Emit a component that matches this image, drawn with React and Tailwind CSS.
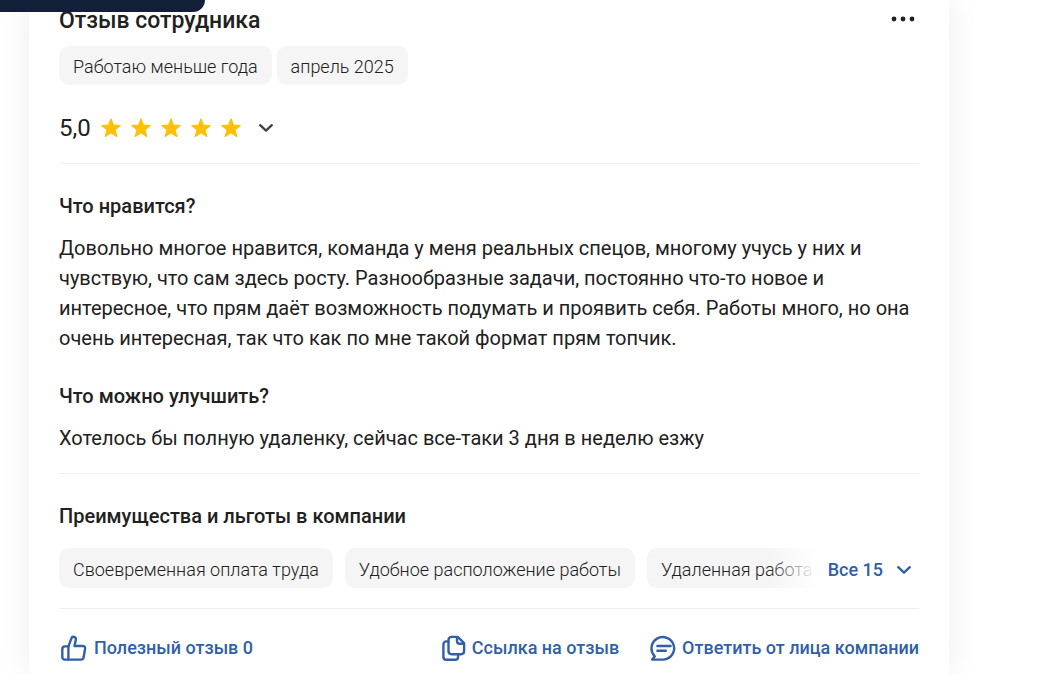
import React, { useState } from 'react';

const benefits = [
  'Своевременная оплата труда',
  'Удобное расположение работы',
  'Удаленная работа',
];

const StarIcon = () => (
  <svg width="20" height="20" viewBox="0 0 20 20" fill="#ffc107" aria-hidden="true">
    <path
      d="M10 0.9l2.5 6.3 6.7 0.3-5.2 4.3 1.8 6.6L10 14.8l-5.8 3.6 1.8-6.6L0.8 7.5l6.7-0.3z"
      stroke="#ffc107"
      strokeWidth="1.2"
      strokeLinejoin="round"
    />
  </svg>
);

const ChevronIcon = () => (
  <svg width="16" height="10" viewBox="0 0 16 10" fill="none" aria-hidden="true">
    <path
      d="M2.2 2.2L8 7.6l5.8-5.4"
      stroke="currentColor"
      strokeWidth="2.4"
      strokeLinecap="round"
      strokeLinejoin="round"
    />
  </svg>
);

const ThumbIcon = () => (
  <svg width="28" height="28" viewBox="0 0 28 28" fill="none" stroke="currentColor" strokeWidth="2.4" strokeLinejoin="round" strokeLinecap="round" aria-hidden="true">
    <path d="M9.4 12.4L12.4 4.4c.4-1.2 1.4-1.8 2.5-1.5 1.5.4 2.2 1.5 1.9 3l-1.3 6.1h8.3c1.6 0 2.6 1.2 2.3 2.7l-1.5 8.6c-.2 1.4-1.2 2.3-2.7 2.3H6c-1.7 0-2.7-1-2.7-2.7v-7.8c0-1.7 1-2.7 2.7-2.7h3.4z" />
    <path d="M9.4 12.4v13.2" />
  </svg>
);

const CopyIcon = () => (
  <svg width="26" height="28" viewBox="0 0 26 28" fill="none" stroke="currentColor" strokeWidth="2.4" strokeLinejoin="round" strokeLinecap="round" aria-hidden="true">
    <path d="M10.6 2.9h6.1l6.4 6.2v8c0 1.9-1.2 3.1-3.1 3.1h-9.4c-1.9 0-3.1-1.2-3.1-3.1V6c0-1.9 1.2-3.1 3.1-3.1z" />
    <path d="M16 3.1v4.2c0 1.6.9 2.5 2.5 2.5h4.3" />
    <path d="M7.4 7.4H5.5c-1.9 0-3.1 1.2-3.1 3.1v12.2c0 1.9 1.2 3.1 3.1 3.1H14c1.9 0 3.1-1.2 3.1-3.1v-2.4" />
  </svg>
);

const MessageIcon = () => (
  <svg width="28" height="28" viewBox="0 0 28 28" fill="none" stroke="currentColor" strokeWidth="2.4" strokeLinejoin="round" strokeLinecap="round" aria-hidden="true">
    <path d="M14.4 25.6H3.2l2.6-3.3A11.3 11.3 0 1 1 14.4 25.6z" />
    <path d="M8.4 12h13.2M8.4 16.8h8.4" />
  </svg>
);

const Section = ({ title, children }) => (
  <section>
    <h3 className="text-xl leading-[30px] font-medium">{title}</h3>
    <p className="mt-3 text-xl leading-[30px]">{children}</p>
  </section>
);

const App = () => {
  const [likes, setLikes] = useState(0);

  return (
    <div className="relative min-h-screen overflow-hidden bg-white pl-[29px] pr-[105px] font-['Roboto','Liberation_Sans',sans-serif] text-[#212121]">
      <div className="absolute left-0 top-0 z-10 h-3 w-[205px] rounded-br-xl bg-[#112038]" />

      <article className="min-h-screen bg-white px-[30px] pt-[5px] shadow-[0_0_32px_rgba(0,0,0,0.07)]">
        <header className="flex items-center justify-between">
          <h2 className="text-[23px] leading-8 font-medium">Отзыв сотрудника</h2>
          <button type="button" aria-label="Действия" className="p-1 pb-2">
            <svg width="24" height="6" viewBox="0 0 24 6" fill="currentColor" aria-hidden="true">
              <circle cx="3" cy="3" r="2.4" />
              <circle cx="12" cy="3" r="2.4" />
              <circle cx="21" cy="3" r="2.4" />
            </svg>
          </button>
        </header>

        <div className="mt-[9px] flex gap-[5px] text-lg font-light">
          <span className="rounded-[10px] bg-[#f5f5f5] px-[14px] pt-[7px] pb-1">Работаю меньше года</span>
          <span className="rounded-[10px] bg-[#f5f5f5] px-[14px] pt-[7px] pb-1">апрель 2025</span>
        </div>

        <div className="mt-7 flex items-center border-b border-[#eeeeee] pb-5">
          <span className="text-2xl leading-[30px]">5,0</span>
          <div className="ml-[10px] flex gap-[10px]" role="img" aria-label="Оценка 5 из 5">
            {[1, 2, 3, 4, 5].map((n) => (
              <StarIcon key={n} />
            ))}
          </div>
          <button type="button" aria-label="Показать оценки" className="ml-[17px] text-[#424242]">
            <ChevronIcon />
          </button>
        </div>

        <div className="flex flex-col gap-7 border-b border-[#eeeeee] pt-[27px] pb-5">
          <Section title="Что нравится?">
            Довольно многое нравится, команда у меня реальных спецов, многому учусь у них и
            чувствую, что сам здесь росту. Разнообразные задачи, постоянно что-то новое и
            интересное, что прям даёт возможность подумать и проявить себя. Работы много, но она
            очень интересная, так что как по мне такой формат прям топчик.
          </Section>
          <Section title="Что можно улучшить?">
            Хотелось бы полную удаленку, сейчас все-таки 3 дня в неделю езжу
          </Section>
        </div>

        <section className="border-b border-[#eeeeee] pt-[27px] pb-5">
          <h3 className="text-xl leading-[30px] font-medium">Преимущества и льготы в компании</h3>
          <div className="mt-[17px] flex items-center">
            <div className="relative min-w-0 flex-1 overflow-hidden">
              <ul className="flex gap-3 text-lg font-light whitespace-nowrap">
                {benefits.map((item) => (
                  <li key={item} className="shrink-0 rounded-[10px] bg-[#f5f5f5] px-[14px] pt-2 pb-1">
                    {item}
                  </li>
                ))}
              </ul>
              <div className="absolute inset-y-0 right-0 w-12 bg-linear-to-r from-white/0 to-white" />
            </div>
            <button type="button" className="flex items-center gap-[13px] pt-1 pr-[7px] pl-3 text-lg font-medium text-[#315fa8]">
              Все 15
              <ChevronIcon />
            </button>
          </div>
        </section>

        <footer className="flex items-center justify-between pt-[25px] text-lg font-medium text-[#315fa8]">
          <button type="button" onClick={() => setLikes(likes + 1)} className="flex items-center gap-[7px]">
            <ThumbIcon />
            Полезный отзыв {likes}
          </button>
          <div className="flex items-center gap-[30px]">
            <button type="button" className="flex items-center gap-[5px]">
              <CopyIcon />
              Ссылка на отзыв
            </button>
            <button type="button" className="flex items-center gap-[5px]">
              <MessageIcon />
              Ответить от лица компании
            </button>
          </div>
        </footer>
      </article>
    </div>
  );
};

export default App;
